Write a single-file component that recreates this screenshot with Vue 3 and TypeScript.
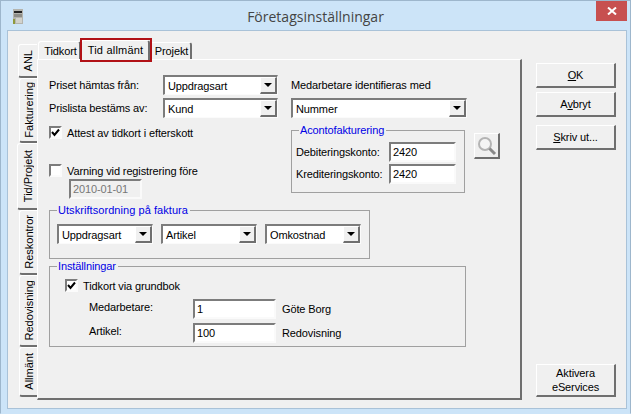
<script setup lang="ts">
const sideTabs = [
  { label: 'ANL', h: 34, kind: 'near' },
  { label: 'Fakturering', h: 65, kind: '' },
  { label: 'Tid/Projekt', h: 67, kind: 'active' },
  { label: 'Reskontror', h: 65, kind: '' },
  { label: 'Redovisning', h: 72, kind: '' },
  { label: 'Allmänt', h: 50, kind: '' },
]
</script>

<template>
  <div class="window">
    <header class="titlebar">
      <svg class="app-icon" width="10" height="15" viewBox="0 0 10 15">
        <rect width="10" height="15" fill="#b4b4ae" />
        <rect x="1" y="2" width="8" height="2" fill="#222" />
        <rect x="1" y="5" width="8" height="3" fill="#8d8d88" />
        <rect x="3" y="9" width="6" height="5" fill="#d2d2cc" />
        <rect x="0" y="10" width="2" height="5" fill="#8f9a3c" />
      </svg>
      <span class="title">Företagsinställningar</span>
      <button class="close" type="button" aria-label="Stäng">
        <svg width="10" height="8" viewBox="0 0 10 8">
          <path d="M1 0.5 L9 7.5 M9 0.5 L1 7.5" stroke="#fff" stroke-width="2" fill="none" />
        </svg>
      </button>
    </header>

    <div class="client">
      <nav class="side-tabs">
        <div
          v-for="t in sideTabs"
          :key="t.label"
          class="side-tab"
          :class="t.kind"
          :style="{ height: t.h + 'px' }"
        >
          <span>{{ t.label }}</span>
        </div>
      </nav>

      <div class="main">
        <div class="top-tabs">
          <div class="top-tab first">Tidkort</div>
          <div class="top-tab active">Tid allmänt</div>
          <div class="top-tab last">Projekt</div>
        </div>

        <section class="panel">
          <div class="upper">
            <div class="col-left">
              <div class="form-row">
                <label class="lbl">Priset hämtas från:</label>
                <div class="select w115"><span>Uppdragsart</span><i class="arrow"></i></div>
              </div>
              <div class="form-row tight">
                <label class="lbl">Prislista bestäms av:</label>
                <div class="select w115"><span>Kund</span><i class="arrow"></i></div>
              </div>
              <div class="check-row attest">
                <span class="check">
                  <svg width="9" height="9" viewBox="0 0 9 9"><path d="M1 4 L3.5 7 L8 1.5" stroke="#000" stroke-width="2" fill="none" /></svg>
                </span>
                <span>Attest av tidkort i efterskott</span>
              </div>
              <div class="check-row warn">
                <span class="check"></span>
                <span>Varning vid registrering före</span>
              </div>
              <div class="input date">2010-01-01</div>
            </div>

            <div class="col-right">
              <div class="med-label">Medarbetare identifieras med</div>
              <div class="select w176"><span>Nummer</span><i class="arrow"></i></div>
              <div class="aconto-row">
                <fieldset class="group aconto">
                  <legend>Acontofakturering</legend>
                  <div class="konto-row">
                    <label>Debiteringskonto:</label>
                    <div class="input konto">2420</div>
                  </div>
                  <div class="konto-row">
                    <label>Krediteringskonto:</label>
                    <div class="input konto">2420</div>
                  </div>
                </fieldset>
                <button class="search" type="button" aria-label="Sök">
                  <svg width="20" height="20" viewBox="0 0 20 20">
                    <circle cx="8" cy="8" r="6" fill="#f4f4f4" stroke="#b4b4b4" stroke-width="2" />
                    <path d="M12.5 12.5 L18 18" stroke="#8a8a8a" stroke-width="3" />
                  </svg>
                </button>
              </div>
            </div>
          </div>

          <fieldset class="group utskrift">
            <legend>Utskriftsordning på faktura</legend>
            <div class="order-row">
              <div class="select w96"><span>Uppdragsart</span><i class="arrow"></i></div>
              <div class="select w96"><span>Artikel</span><i class="arrow"></i></div>
              <div class="select w96"><span>Omkostnad</span><i class="arrow"></i></div>
            </div>
          </fieldset>

          <fieldset class="group settings">
            <legend>Inställningar</legend>
            <div class="check-row grundbok">
              <span class="check">
                <svg width="9" height="9" viewBox="0 0 9 9"><path d="M1 4 L3.5 7 L8 1.5" stroke="#000" stroke-width="2" fill="none" /></svg>
              </span>
              <span>Tidkort via grundbok</span>
            </div>
            <div class="entry-row">
              <label>Medarbetare:</label>
              <div class="input entry">1</div>
              <span>Göte Borg</span>
            </div>
            <div class="entry-row">
              <label>Artikel:</label>
              <div class="input entry">100</div>
              <span>Redovisning</span>
            </div>
          </fieldset>
        </section>
      </div>

      <aside class="actions">
        <button class="btn" type="button"><u>O</u>K</button>
        <button class="btn" type="button">A<u>v</u>bryt</button>
        <button class="btn print" type="button"><u>S</u>kriv ut...</button>
        <button class="btn eservices" type="button">Aktivera<br />eServices</button>
      </aside>
    </div>
  </div>
</template>

<style>
html,
body {
  margin: 0;
  overflow: hidden;
}
</style>

<style scoped>
* {
  box-sizing: border-box;
}
.window {
  width: 631px;
  height: 414px;
  display: flex;
  flex-direction: column;
  background: #cce4f8;
  border: 1px solid #9db6cc;
  border-bottom-color: #cce4f8;
  font-family: 'Liberation Sans', Arial, sans-serif;
  font-size: 11px;
  letter-spacing: -0.12px;
  color: #000;
  overflow: hidden;
}
.titlebar {
  height: 29px;
  flex: none;
  position: relative;
  display: flex;
  align-items: center;
  justify-content: center;
}
.app-icon {
  position: absolute;
  left: 12px;
  top: 8px;
}
.title {
  font-family: 'Open Sans', 'Liberation Sans', sans-serif;
  font-size: 14px;
  letter-spacing: 0;
  color: #444;
  padding-top: 2px;
}
.close {
  position: absolute;
  right: 3px;
  top: 0;
  width: 31px;
  height: 20px;
  padding: 0;
  border: 0;
  background: #c75050;
  display: flex;
  align-items: center;
  justify-content: center;
}
.client {
  flex: 1;
  display: flex;
  align-items: stretch;
  margin: 0 3px 4px 6px;
  background: #f0f0f0;
  border: 1px solid #a9c2d8;
  padding: 10px 0 0 10px;
  min-height: 0;
}
.side-tabs {
  flex: none;
  width: 19px;
  margin-top: 3px;
  display: flex;
  flex-direction: column;
}
.side-tab {
  width: 18px;
  margin-left: 1px;
  background: #f0f0f0;
  border: 1px solid #fff;
  border-right: 0;
  border-bottom: 2px solid #6f6f6f;
  border-radius: 3px 0 0 3px;
  display: flex;
  align-items: center;
  justify-content: center;
  letter-spacing: 0;
}
.side-tab.near {
  width: 19px;
  margin-left: 0;
}
.side-tab.active {
  width: 20px;
  margin-left: -1px;
}
.side-tab span {
  writing-mode: vertical-rl;
  transform: rotate(180deg);
  white-space: nowrap;
}
.main {
  flex: none;
  width: 485px;
  height: 359px;
  display: flex;
  flex-direction: column;
}
.top-tabs {
  height: 18px;
  flex: none;
  display: flex;
  align-items: flex-start;
  padding-left: 1px;
}
.top-tab {
  height: 18px;
  padding-top: 3px;
  text-align: center;
  background: #f0f0f0;
  border: 1px solid #fff;
  border-bottom: 0;
  border-right: 2px solid #6f6f6f;
  border-radius: 3px 3px 0 0;
}
.top-tab.first {
  width: 43px;
  padding-left: 3px;
}
.top-tab.active {
  width: 69px;
  height: 20px;
  margin-top: -1px;
  position: relative;
  z-index: 1;
  letter-spacing: 0.2px;
  padding-left: 1px;
}
.top-tab.active::after {
  content: '';
  position: absolute;
  left: -2px;
  right: -4px;
  top: -3px;
  bottom: -2px;
  border: 2px solid #b11116;
}
.top-tab.last {
  width: 42px;
  height: 17px;
  margin-top: 1px;
  padding-top: 2px;
  padding-left: 2px;
}
.panel {
  flex: 1;
  min-height: 0;
  background: #f0f0f0;
  border-top: 1px solid #fff;
  border-left: 1px solid #fff;
  border-right: 2px solid #6f6f6f;
  border-bottom: 2px solid #6f6f6f;
  padding: 15px 0 0 11px;
}
.upper {
  height: 128px;
  display: flex;
}
.col-left {
  width: 242px;
  flex: none;
}
.form-row {
  display: flex;
  align-items: center;
  height: 20px;
}
.form-row.tight {
  margin-top: 3px;
}
.lbl {
  width: 114px;
  flex: none;
}
.select {
  height: 20px;
  display: flex;
  align-items: stretch;
  justify-content: space-between;
  background: #fff;
  border-style: solid;
  border-width: 2px 1px 1px 2px;
  border-color: #7c7c7c #fbfbfb #fbfbfb #7c7c7c;
  padding-left: 3px;
  white-space: nowrap;
}
.select span {
  align-self: center;
}
.w115 {
  width: 115px;
}
.w176 {
  width: 176px;
}
.w96 {
  width: 96px;
}
.arrow {
  width: 17px;
  flex: none;
  background: #f0f0f0;
  border-left: 1px solid #fff;
  border-top: 1px solid #fff;
  border-right: 2px solid #6f6f6f;
  border-bottom: 2px solid #6f6f6f;
  position: relative;
}
.arrow::after {
  content: '';
  position: absolute;
  left: 3px;
  top: 5px;
  border: 4px solid transparent;
  border-top-color: #000;
  border-bottom: 0;
}
.check-row {
  display: flex;
  align-items: center;
  gap: 5px;
  height: 13px;
}
.attest {
  margin-top: 8px;
}
.warn {
  margin-top: 25px;
}
.check {
  width: 13px;
  height: 13px;
  flex: none;
  background: #fff;
  border: 2px solid #7c7c7c;
  border-right-color: #fbfbfb;
  border-bottom-color: #fbfbfb;
  display: flex;
}
.input {
  height: 20px;
  background: #fff;
  border: 2px solid #7c7c7c;
  border-right-color: #fafafa;
  border-bottom-color: #fafafa;
  padding-left: 2px;
  display: flex;
  align-items: center;
}
.date {
  width: 73px;
  margin: 2px 0 0 20px;
  background: #f0f0f0;
  color: #777;
}
.col-right {
  flex: 1;
}
.med-label {
  height: 20px;
  line-height: 20px;
  margin-bottom: 3px;
}
.aconto-row {
  display: flex;
  align-items: flex-start;
  margin-top: 5px;
}
.group {
  margin: 0;
  padding: 0;
  min-width: 0;
  border: 1px solid #a0a0a0;
  border-radius: 0;
}
.group legend {
  color: #0000e6;
  margin-left: 7px;
  padding: 0 2px 0 1px;
  line-height: 14px;
}
.aconto {
  width: 174px;
  height: 70px;
}
.konto-row {
  display: flex;
  align-items: center;
  justify-content: space-between;
  height: 20px;
  margin: 0 8px 2px 4px;
}
.konto-row:first-of-type {
  margin-top: 5px;
}
.konto {
  width: 67px;
}
.search {
  width: 26px;
  height: 26px;
  margin: 10px 0 0 9px;
  padding: 0;
  background: #f0f0f0;
  border: 1px solid #fff;
  border-right: 2px solid #6f6f6f;
  border-bottom: 2px solid #6f6f6f;
  display: flex;
  align-items: center;
  justify-content: center;
}
.utskrift {
  width: 321px;
  height: 56px;
}
.utskrift legend {
  letter-spacing: 0.06px;
}
.order-row {
  display: flex;
  gap: 8px;
  margin: 7px 0 0 7px;
}
.settings {
  width: 417px;
  height: 88px;
}
.grundbok {
  margin: 6px 0 0 15px;
}
.entry-row {
  display: flex;
  align-items: center;
  height: 20px;
  margin: 4px 0 0 15px;
  padding-left: 24px;
}
.grundbok + .entry-row {
  margin-top: 7px;
}
.entry-row label {
  width: 104px;
  flex: none;
  margin-bottom: 4px;
}
.entry {
  width: 83px;
  margin-right: 6px;
}
.actions {
  flex: none;
  width: 80px;
  margin: 22px 0 0 14px;
  display: flex;
  flex-direction: column;
}
.btn {
  width: 80px;
  height: 25px;
  flex: none;
  padding: 0;
  background: #f0f0f0;
  border: 1px solid #fff;
  border-right: 2px solid #6f6f6f;
  border-bottom: 2px solid #6f6f6f;
  font: inherit;
  letter-spacing: inherit;
  color: #000;
  margin-bottom: 4px;
}
.print {
  margin-top: 4px;
}
.eservices {
  height: 33px;
  margin-top: auto;
  margin-bottom: 11px;
  line-height: 14px;
}
</style>
